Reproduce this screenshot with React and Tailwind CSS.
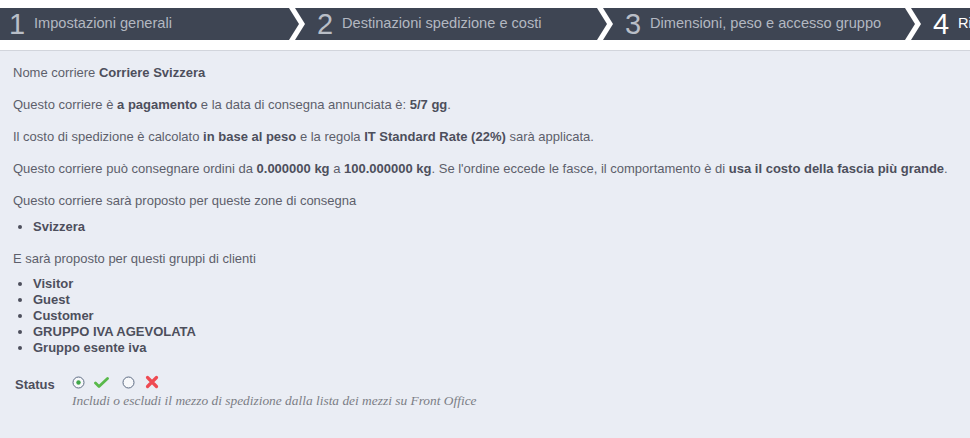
import React from 'react';

const steps = [
  { n: '1', label: 'Impostazioni generali' },
  { n: '2', label: 'Destinazioni spedizione e costi' },
  { n: '3', label: 'Dimensioni, peso e accesso gruppo' },
  { n: '4', label: 'Riepilogo', current: true },
];

const groups = ['Visitor', 'Guest', 'Customer', 'GRUPPO IVA AGEVOLATA', 'Gruppo esente iva'];

function Chevron() {
  return (
    <svg className="absolute right-0 top-0" width="19" height="32" viewBox="0 0 19 32">
      <polygon points="0,0 6,0 16,16 6,32 0,32 10,16" fill="#ffffff" />
    </svg>
  );
}

function Radio({ checked }) {
  return (
    <svg width="13" height="13" viewBox="0 0 13 13">
      <circle cx="6.5" cy="6.5" r="5.5" fill="#f7f8fa" stroke="#5d6b82" strokeWidth="1" />
      {checked && <circle cx="6.5" cy="6.5" r="2.2" fill="#3fa648" />}
    </svg>
  );
}

function Check() {
  return (
    <svg width="15" height="13" viewBox="0 0 15 13">
      <path d="M1.5 7 L5 10.5 L13.5 2.5" fill="none" stroke="#59b94a" strokeWidth="2.8" strokeLinecap="round" strokeLinejoin="round" />
    </svg>
  );
}

function Cross() {
  return (
    <svg width="14" height="14" viewBox="0 0 14 14">
      <path d="M2.5 2.5 L11.5 11.5 M11.5 2.5 L2.5 11.5" fill="none" stroke="#ef4a52" strokeWidth="3.2" strokeLinecap="round" />
    </svg>
  );
}

export default function App() {
  return (
    <div className="w-[970px] h-[438px] overflow-hidden bg-white font-['Liberation_Sans',Arial,sans-serif]">
      <div className="pt-2 h-[50px]">
        <div className="flex h-8 bg-[#3e4553] whitespace-nowrap">
          {steps.map((s) => (
            <div key={s.n} className="relative w-[308px] shrink-0 flex items-center h-8">
              <span className={`pl-[9px] w-[34px] text-[29px] leading-8 font-light ${s.current ? 'text-white' : 'text-[#b9bec7]'}`}>{s.n}</span>
              <span className={`text-[14.6px] ${s.current ? 'text-white' : 'text-[#b3b8c1]'}`}>{s.label}</span>
              <Chevron />
            </div>
          ))}
        </div>
      </div>
      <div className="border-t border-[#d2d5dc] bg-[#eaedf4] h-[388px] px-[13px] pt-[13px] text-[13px] leading-[17px] text-[#5d5f6b]">
        <p className="mb-[15px]">Nome corriere <b className="text-[#4d4f5c]">Corriere Svizzera</b></p>
        <p className="mb-[15px]">Questo corriere è <b className="text-[#4d4f5c]">a pagamento</b> e la data di consegna annunciata è: <b className="text-[#4d4f5c]">5/7 gg</b>.</p>
        <p className="mb-[15px]">Il costo di spedizione è calcolato <b className="text-[#4d4f5c]">in base al peso</b> e la regola <b className="text-[#4d4f5c]">IT Standard Rate (22%)</b> sarà applicata.</p>
        <p className="mb-[15px] whitespace-nowrap">Questo corriere può consegnare ordini da <b className="text-[#4d4f5c]">0.000000 kg</b> a <b className="text-[#4d4f5c]">100.000000 kg</b>. Se l'ordine eccede le fasce, il comportamento è di <b className="text-[#4d4f5c]">usa il costo della fascia più grande</b>.</p>
        <p className="mb-[10px]">Questo corriere sarà proposto per queste zone di consegna</p>
        <ul className="mb-[15px] list-disc pl-[20px] font-bold text-[#4d4f5c] leading-4">
          <li>Svizzera</li>
        </ul>
        <p className="mb-[9px]">E sarà proposto per questi gruppi di clienti</p>
        <ul className="list-disc pl-[20px] font-bold text-[#4d4f5c] leading-4">
          {groups.map((g) => (
            <li key={g}>{g}</li>
          ))}
        </ul>
        <div className="flex mt-[17px]">
          <div className="w-[59px] pl-[2px] pt-[3px] text-[13px] font-bold text-[#4d4f5c]">Status</div>
          <div>
            <div className="flex items-center h-[18px]">
              <Radio checked />
              <span className="ml-[9px]"><Check /></span>
              <span className="ml-[13px]"><Radio /></span>
              <span className="ml-[10px]"><Cross /></span>
            </div>
            <div className="mt-[1px] font-['Liberation_Serif',serif] italic text-[13.4px] leading-[17px] text-[#7b7d85]">Includi o escludi il mezzo di spedizione dalla lista dei mezzi su Front Office</div>
          </div>
        </div>
      </div>
    </div>
  );
}
